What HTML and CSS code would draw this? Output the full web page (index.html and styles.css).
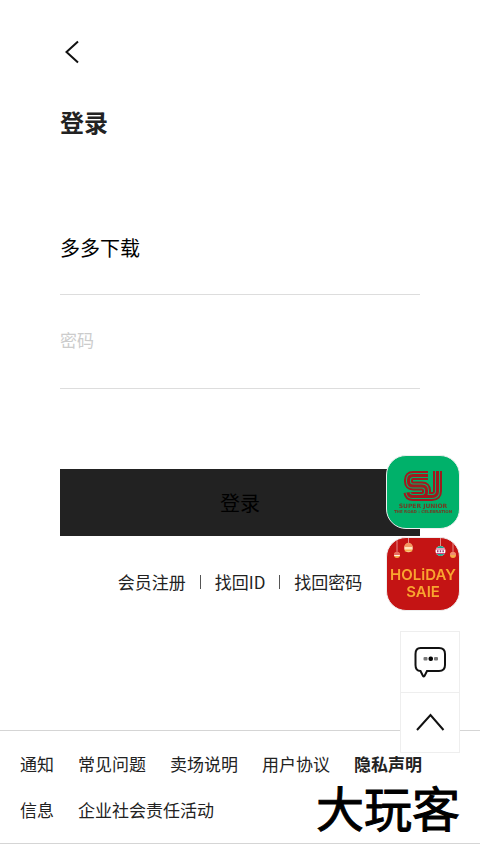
FILE: index.html
```html
<!DOCTYPE html>
<html lang="zh-CN">
<head>
<meta charset="utf-8">
<meta name="viewport" content="width=device-width, initial-scale=1">
<title>登录</title>
<link rel="stylesheet" href="styles.css">
</head>
<body>
<main class="login">
  <button class="back" type="button" aria-label="返回">
    <svg width="24" height="24" viewBox="0 0 24 24"><path d="M18 1.500 6.500 12 18 22.500"/></svg>
  </button>
  <h1 class="title">登录</h1>
  <form class="form">
    <input class="field" type="text" value="多多下载" aria-label="账号">
    <input class="field field-password" type="password" placeholder="密码" aria-label="密码">
    <button class="submit" type="submit">登录</button>
  </form>
  <nav class="links">
    <a href="#">会员注册</a>
    <span class="bar"></span>
    <a href="#">找回ID</a>
    <span class="bar"></span>
    <a href="#">找回密码</a>
  </nav>
</main>

<footer class="footer">
  <nav class="footer-links">
    <a href="#">通知</a>
    <a href="#">常见问题</a>
    <a href="#">卖场说明</a>
    <a href="#">用户协议</a>
    <a href="#" class="strong">隐私声明</a>
    <a href="#">信息</a>
    <a href="#">企业社会责任活动</a>
  </nav>
  <span class="watermark">大玩客</span>
</footer>

<aside class="floating">
  <a class="badge badge-green" href="#">
    <svg width="72" height="72" viewBox="0 0 72 72">
      <defs>
        <g id="sj">
          <path d="M41 19.500H26q-4.500 0-4.500 4.500v1.500q0 4.500 4.500 4.500h9q4.500 0 4.500 4.500v1.500q0 4.500-4.500 4.500h-9q-4.500 0-5-4"/>
          <path d="M50.500 15v20q0 5.500-5.500 5.500H35"/>
        </g>
      </defs>
      <g fill="none">
        <use href="#sj" stroke="#a0191d" stroke-width="9"/>
        <use href="#sj" stroke="#00b16a" stroke-width="5"/>
        <use href="#sj" stroke="#a0191d" stroke-width="3"/>
      </g>
      <text class="sj-name" x="36" y="52">SUPER JUNIOR</text>
      <text class="sj-sub" x="36" y="57">THE ROAD : CELEBRATION</text>
    </svg>
  </a>
  <a class="badge badge-red" href="#">
    <svg width="72" height="72" viewBox="0 0 72 72">
      <path d="M10 0v15M21.500 0v6M53.500 0v9M66 3v12" stroke="#e58a87" stroke-width="1"/>
      <circle cx="10" cy="17" r="3" fill="#f6ad4b"/><path d="M7 17a3 3 0 0 1 6 0z" fill="#e86b62"/><path d="M7.200 17.500h5.600" stroke="#fff3df"/>
      <circle cx="21.500" cy="10" r="4.300" fill="#ffe7bd"/><path d="M17.200 9a4.300 4.300 0 0 1 8.600 0z" fill="#f39a63"/><path d="M17.800 12.500h7.400" stroke="#f6ad4b" stroke-width="2"/>
      <circle cx="53.500" cy="13" r="5" fill="#fff"/><path d="M49.500 10a5 5 0 0 1 8 0zM49.500 16a5 5 0 0 0 8 0z" fill="#1ba88c"/><path d="M49 11h9M49 15.500h9" stroke="#d3437b"/><path d="M50 13.200h7" stroke="#a33974" stroke-width="2" stroke-dasharray="1.500 1.200"/>
      <circle cx="66" cy="17" r="3" fill="#f6ad4b"/><path d="M63 17a3 3 0 0 1 6 0z" fill="#f08a74"/>
      <text class="sale" x="36" y="42">HOLiDAY</text>
      <text class="sale" x="36" y="59">SAIE</text>
    </svg>
  </a>
  <div class="tools">
    <button class="tool" type="button" aria-label="客服">
      <svg width="36" height="36" viewBox="0 0 36 36">
        <path d="M8.500 4H27q6 0 6 6v11q0 6-6 6H15l-2.500 5q-.8 1-1.500 0l-2.500-5q-5 0-5-6V10q0-6 5-6z"/>
        <g stroke="none"><rect x="11.500" y="13" width="4" height="3.500" rx="1" fill="#777"/><rect x="22" y="13" width="4" height="3.500" rx="1" fill="#777"/><rect x="16.500" y="12.500" width="4.500" height="4.500" rx="2" fill="#000"/></g>
      </svg>
    </button>
    <button class="tool" type="button" aria-label="回到顶部">
      <svg width="36" height="36" viewBox="0 0 36 36"><path d="M5 25 18.500 10 31.500 25"/></svg>
    </button>
  </div>
</aside>
</body>
</html>
```
FILE: styles.css
```css
* {
  box-sizing: border-box;
}

body {
  margin: 0;
  background: #fff;
  color: #222;
  font: 17px/24px "Noto Sans CJK SC", sans-serif;
}

a {
  color: inherit;
  text-decoration: none;
}

button,
input {
  margin: 0;
  padding: 0;
  border: 0;
  border-radius: 0;
  background: none;
  font: inherit;
}

svg {
  display: block;
}

.login {
  padding: 40px 60px 136px;
}

.back {
  display: block;
}

.back path,
.tool path {
  fill: none;
  stroke: #111;
  stroke-width: 2;
}

.title {
  margin: 40px 0 0;
  font-size: 24px;
  line-height: 36px;
}

.form {
  display: flex;
  flex-direction: column;
  margin-top: 61px;
}

.field {
  width: 100%;
  height: 94px;
  border-bottom: 1px solid #ddd;
  outline: 0;
  color: #000;
  font-size: 20px;
}

.field-password {
  padding-bottom: 6px;
}

.field::placeholder {
  color: #ccc;
  font-size: 17px;
  opacity: 1;
}

.submit {
  height: 67px;
  margin-top: 80px;
  background: #222;
  color: #000;
  font-size: 20px;
}

.links {
  display: flex;
  justify-content: center;
  align-items: center;
  gap: 14px;
  margin-top: 34px;
}

.bar {
  width: 1px;
  height: 14px;
  background: #555;
}

.footer {
  position: relative;
  padding: 10px 20px;
  border: solid #d5d5d5;
  border-width: 1px 0;
}

.footer-links {
  display: flex;
  flex-wrap: wrap;
  column-gap: 24px;
  line-height: 46px;
}

.strong {
  font-weight: 700;
}

.watermark {
  position: absolute;
  right: 20px;
  bottom: 13px;
  color: #000;
  font-size: 48px;
  line-height: 48px;
  -webkit-text-stroke: 1px #000;
}

.floating {
  position: fixed;
  right: 20px;
  bottom: 100px;
  display: flex;
  flex-direction: column;
  align-items: flex-end;
  gap: 8px;
}

.badge {
  overflow: hidden;
  border: 1px solid #eee;
  border-radius: 20px;
}

.badge-green {
  background: #00b16a;
}

.badge-red {
  background: #c41414;
}

.sj-name,
.sj-sub {
  fill: #713b24;
  font-family: "DejaVu Sans", sans-serif;
  font-size: 6px;
  font-weight: 700;
  text-anchor: middle;
}

.sj-sub {
  font-size: 4px;
}

.sale {
  fill: #f9a52f;
  font-family: Inter, sans-serif;
  font-size: 15px;
  font-weight: 600;
  text-anchor: middle;
}

.tools {
  width: 60px;
  margin-top: 12px;
  border: 1px solid #eee;
  background: #fff;
}

.tool {
  display: flex;
  justify-content: center;
  align-items: center;
  width: 100%;
  height: 60px;
}

.tool + .tool {
  border-top: 1px solid #eee;
}
```
